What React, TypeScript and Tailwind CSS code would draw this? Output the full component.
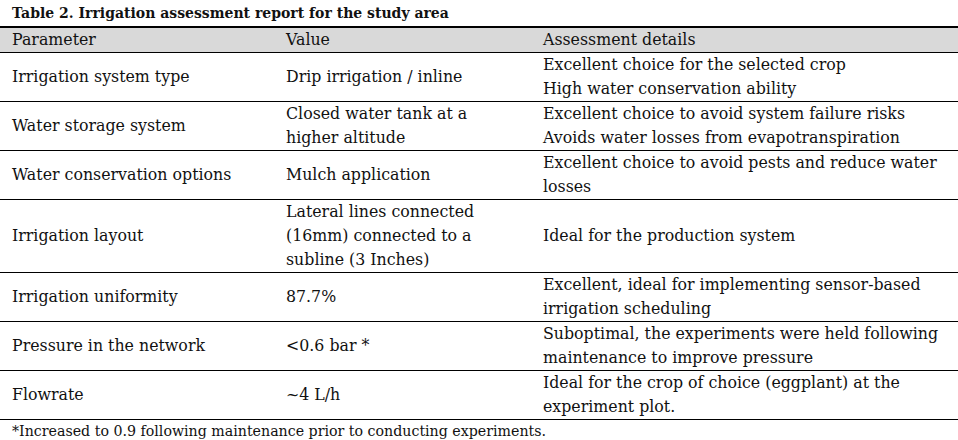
type Row = {
  param: string;
  value: string[];
  details: string[];
};

const rows: Row[] = [
  {
    param: "Irrigation system type",
    value: ["Drip irrigation / inline"],
    details: ["Excellent choice for the selected crop", "High water conservation ability"],
  },
  {
    param: "Water storage system",
    value: ["Closed water tank at a", "higher altitude"],
    details: ["Excellent choice to avoid system failure risks", "Avoids water losses from evapotranspiration"],
  },
  {
    param: "Water conservation options",
    value: ["Mulch application"],
    details: ["Excellent choice to avoid pests and reduce water", "losses"],
  },
  {
    param: "Irrigation layout",
    value: ["Lateral lines connected", "(16mm) connected to a", "subline (3 Inches)"],
    details: ["Ideal for the production system"],
  },
  {
    param: "Irrigation uniformity",
    value: ["87.7%"],
    details: ["Excellent, ideal for implementing sensor-based", "irrigation scheduling"],
  },
  {
    param: "Pressure in the network",
    value: ["<0.6 bar *"],
    details: ["Suboptimal, the experiments were held following", "maintenance to improve pressure"],
  },
  {
    param: "Flowrate",
    value: ["~4 L/h"],
    details: ["Ideal for the crop of choice (eggplant) at the", "experiment plot."],
  },
];

function Lines({ lines }: { lines: string[] }) {
  return (
    <div className="px-[11px]">
      {lines.map((l) => (
        <div key={l} className="whitespace-nowrap">
          {l}
        </div>
      ))}
    </div>
  );
}

export default function App() {
  return (
    <div className="w-[958px] h-[440px] overflow-hidden bg-white text-[#111] font-['DejaVu_Serif',serif] text-[15.8px] leading-[24px]">
      {/* Caption */}
      <div className="h-[26px] pl-[12px] pt-[2px] font-bold text-[14px] leading-[22px]">
        Table 2. Irrigation assessment report for the study area
      </div>

      {/* Header */}
      <div className="grid grid-cols-[275px_257px_1fr] bg-[#d9d9d9] border-t-2 border-b border-black">
        <div className="px-[12px]">Parameter</div>
        <div className="px-[11px]">Value</div>
        <div className="px-[11px]">Assessment details</div>
      </div>

      {/* Body */}
      {rows.map((r) => (
        <div
          key={r.param}
          className="grid grid-cols-[275px_257px_1fr] items-center border-b border-black"
        >
          <div className="px-[12px] whitespace-nowrap">{r.param}</div>
          <Lines lines={r.value} />
          <Lines lines={r.details} />
        </div>
      ))}

      {/* Footnote */}
      <p className="pl-[12px] text-[14.2px] leading-[22px]">
        *Increased to 0.9 following maintenance prior to conducting experiments.
      </p>
    </div>
  );
}
